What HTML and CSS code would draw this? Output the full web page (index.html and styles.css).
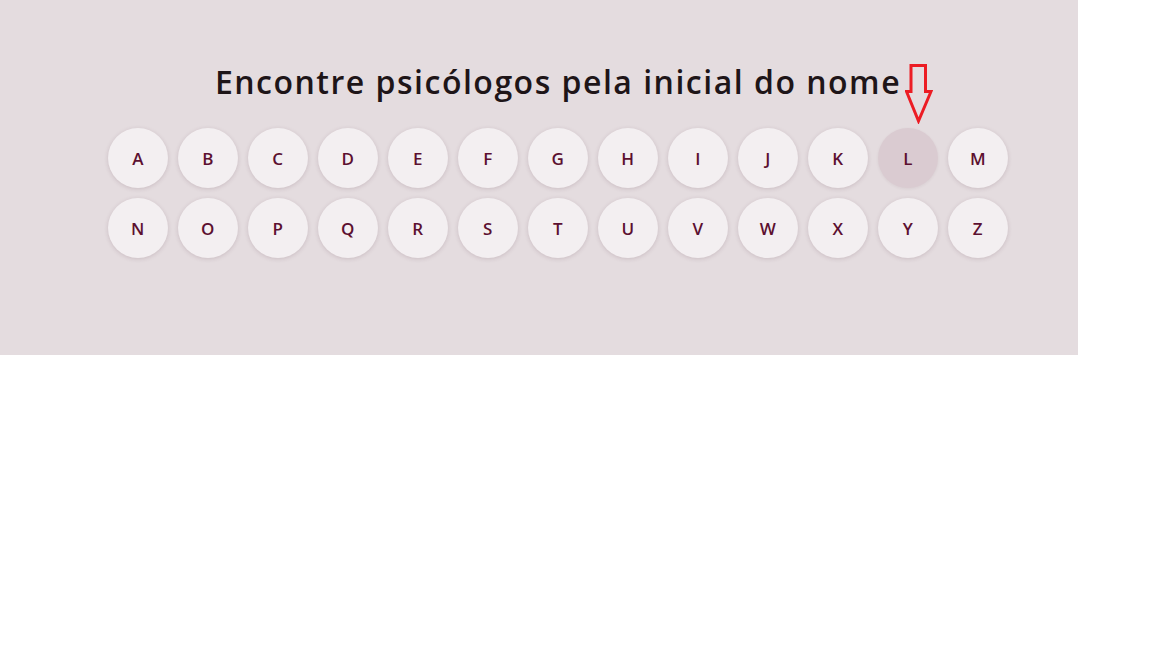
FILE: index.html
```html
<!DOCTYPE html>
<html lang="pt">
<head>
<meta charset="utf-8">
<link rel="stylesheet" href="styles.css">
</head>
<body>
<section class="panel">
  <div class="title-row">
    <h2 class="title">Encontre psicólogos pela inicial do nome</h2>
    <svg class="arrow" width="28" height="60" viewBox="0 0 28 60">
      <path d="M6 1.5 H20.5 V27.5 H26 L13.5 57 L1.5 27.5 H6 Z" fill="none" stroke="#ec1c24" stroke-width="3" stroke-linejoin="miter"/>
    </svg>
  </div>
  <div class="letters">
    <a class="letter">A</a><a class="letter">B</a><a class="letter">C</a><a class="letter">D</a><a class="letter">E</a><a class="letter">F</a><a class="letter">G</a><a class="letter">H</a><a class="letter">I</a><a class="letter">J</a><a class="letter">K</a><a class="letter active">L</a><a class="letter">M</a>
    <a class="letter">N</a><a class="letter">O</a><a class="letter">P</a><a class="letter">Q</a><a class="letter">R</a><a class="letter">S</a><a class="letter">T</a><a class="letter">U</a><a class="letter">V</a><a class="letter">W</a><a class="letter">X</a><a class="letter">Y</a><a class="letter">Z</a>
  </div>
</section>
</body>
</html>
```
FILE: styles.css
```css
html, body {
  margin: 0;
  padding: 0;
  background: #ffffff;
}
body {
  font-family: "Open Sans", "Noto Sans", sans-serif;
}
.panel {
  width: 1078px;
  height: 355px;
  background: #e4dcdf;
  box-sizing: border-box;
  padding: 62px 0 0 38px;
  display: flex;
  flex-direction: column;
  align-items: center;
}
.title-row {
  position: relative;
}
.title {
  margin: 0;
  font-size: 32px;
  font-weight: 600;
  color: #1e1518;
  line-height: 40px;
  letter-spacing: 1.5px;
}
.arrow {
  position: absolute;
  left: calc(100% + 4px);
  top: 2px;
}
.letters {
  margin-top: 26px;
  display: grid;
  grid-template-columns: repeat(13, 60px);
  gap: 10px;
}
.letter {
  width: 60px;
  height: 60px;
  border-radius: 50%;
  background: #f3eff1;
  box-shadow: 0 1px 4px rgba(90, 50, 65, 0.18);
  display: flex;
  align-items: center;
  justify-content: center;
  color: #5c1030;
  font-size: 17px;
  font-weight: 600;
  letter-spacing: 0.5px;
  cursor: pointer;
}
.letter.active {
  background: #dacbd1;
  box-shadow: 0 1px 3px rgba(90, 50, 65, 0.08);
}
```
